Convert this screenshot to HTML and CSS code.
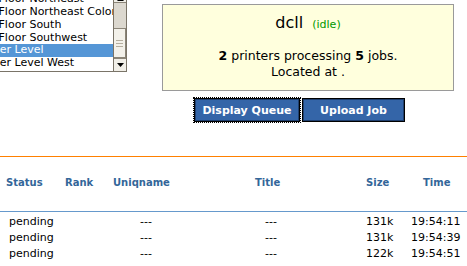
FILE: index.html
```html
<!DOCTYPE html>
<html lang="en">
<head>
<meta charset="utf-8">
<title>dcll printer queue</title>
<link rel="stylesheet" href="styles.css">
</head>
<body>
<div class="top">
  <div class="listbox">
    <div class="options">
      <div class="options-inner">
        <div class="opt">1st Floor North</div>
        <div class="opt">1st Floor Northeast</div>
        <div class="opt">1st Floor Northeast Color</div>
        <div class="opt">1st Floor South</div>
        <div class="opt">1st Floor Southwest</div>
        <div class="opt sel">Lower Level</div>
        <div class="opt">Lower Level West</div>
        <div class="opt">Mezzanine</div>
      </div>
    </div>
    <div class="sbar">
      <div class="sb-up"><svg width="7" height="4" viewBox="0 0 7 4"><polygon points="3.5,0 7,4 0,4" fill="#000"/></svg></div>
      <div class="sb-track"></div>
      <div class="sb-thumb"><svg width="7" height="7" viewBox="0 0 7 7"><path d="M0 0.5H7M0 3.5H7M0 6.5H7" stroke="#b5ae9f" stroke-width="1"/></svg></div>
      <div class="sb-down"><svg width="7" height="4" viewBox="0 0 7 4"><polygon points="0,0 7,0 3.5,4" fill="#000"/></svg></div>
    </div>
  </div>
  <div class="info">
    <div class="box">
      <div class="title">dcll <span class="state">(idle)</span></div>
      <div class="summary"><b>2</b> printers processing <b>5</b> jobs.<br>Located at .</div>
    </div>
    <div class="actions">
      <button class="btn btn-display" type="button">Display Queue</button>
      <button class="btn btn-upload" type="button">Upload Job</button>
    </div>
  </div>
</div>
<div class="queue">
  <div class="qhead">
    <div class="c1">Status</div>
    <div class="c2">Rank</div>
    <div class="c3">Uniqname</div>
    <div class="c4">Title</div>
    <div class="c5">Size</div>
    <div class="c6">Time</div>
  </div>
  <div class="qrows">
    <div class="qrow"><div class="c1">pending</div><div class="c2"></div><div class="c3">---</div><div class="c4">---</div><div class="c5">131k</div><div class="c6">19:54:11</div></div>
    <div class="qrow"><div class="c1">pending</div><div class="c2"></div><div class="c3">---</div><div class="c4">---</div><div class="c5">131k</div><div class="c6">19:54:39</div></div>
    <div class="qrow"><div class="c1">pending</div><div class="c2"></div><div class="c3">---</div><div class="c4">---</div><div class="c5">122k</div><div class="c6">19:54:51</div></div>
  </div>
</div>
</body>
</html>
```
FILE: styles.css
```css
html, body {
  margin: 0;
  background: #fff;
  color: #000;
  font-family: "DejaVu Sans", Verdana, sans-serif;
  overflow: hidden;
}

.top {
  display: flex;
  align-items: flex-start;
}

/* list box (scrolled state) */
.listbox {
  flex: none;
  display: flex;
  width: 152px;
  height: 84px;
  box-sizing: border-box;
  border: 1px solid #7a7468;
  margin: -12px 0 0 -25px;
  background: #fff;
}
.options {
  flex: 1;
  min-width: 0;
  overflow: hidden;
}
.options-inner {
  margin-top: -8.5px;
}
.opt {
  font-size: 11px;
  line-height: 12.8px;
  padding-left: 2px;
  white-space: nowrap;
}
.opt.sel {
  background: #5596d6;
  color: #fff;
}
.sbar {
  flex: none;
  width: 13px;
  box-sizing: border-box;
  border-left: 1px solid #7a7468;
  display: flex;
  flex-direction: column;
  background: #dcd8cf;
}
.sb-up {
  height: 14px;
  box-sizing: border-box;
  border-bottom: 1px solid #8b8578;
  background: #f1efe8;
  display: flex;
  align-items: flex-end;
  justify-content: center;
  padding-bottom: 1px;
}
.sb-up svg, .sb-down svg, .sb-thumb svg { display: block; }
.sb-track {
  height: 25px;
}
.sb-thumb {
  height: 30px;
  box-sizing: border-box;
  border: 1px solid #8b8578;
  border-left: 0;
  background: #f3f1ea;
  display: flex;
  align-items: center;
  justify-content: center;
}
.sb-down {
  height: 13px;
  box-sizing: border-box;
  border-top: 1px solid #8b8578;
  background: #f1efe8;
  display: flex;
  align-items: center;
  justify-content: center;
}

/* printer info */
.info {
  flex: none;
  width: 292px;
  margin: 4px 0 0 35px;
}
.box {
  box-sizing: border-box;
  height: 87px;
  border: 1px solid #9a9a9a;
  background: #ffffdd;
  text-align: center;
  padding-top: 8px;
}
.title {
  font-size: 16px;
  line-height: 20px;
}
.state {
  font-size: 11px;
  color: #009900;
  margin-left: 4px;
}
.summary {
  margin-top: 12.7px;
  font-size: 12.5px;
  line-height: 16px;
}
.actions {
  display: flex;
  gap: 2px;
  margin-top: 7px;
  padding-left: 32px;
}
.btn {
  height: 24px;
  box-sizing: border-box;
  border: 1px solid #000;
  box-shadow: inset 0 0 0 1px #1f3f6e;
  background: #3465a8;
  color: #fff;
  font-family: "DejaVu Sans", Verdana, sans-serif;
  font-weight: bold;
  font-size: 11px;
  padding: 0;
}
.btn-display {
  width: 106px;
  outline: 1px dotted #000;
}
.btn-upload {
  width: 103px;
}

/* queue table */
.queue {
  margin-top: 34px;
}
.qhead, .qrow {
  display: grid;
  grid-template-columns: 60px 45px 110px 125px 65px 1fr;
  white-space: nowrap;
}
.qhead {
  border-top: 1px solid #ff8000;
  border-bottom: 1px solid #6699cc;
  padding: 20px 0 22px;
  font-size: 10px;
  font-weight: bold;
  line-height: 12px;
  color: #336699;
}
.qhead .c1 { padding-left: 6px; }
.qhead .c2 { padding-left: 5px; }
.qhead .c3 { padding-left: 8px; }
.qhead .c4 { padding-left: 40px; }
.qhead .c5 { padding-left: 26px; }
.qhead .c6 { padding-left: 18px; }

.qrows {
  padding-top: 2px;
}
.qrow {
  font-size: 11px;
  line-height: 16px;
}
.qrow .c1 { padding-left: 9px; }
.qrow .c3 { padding-left: 35px; }
.qrow .c4 { padding-left: 50px; }
.qrow .c5 { padding-left: 26px; }
.qrow .c6 { padding-left: 6px; }
```
